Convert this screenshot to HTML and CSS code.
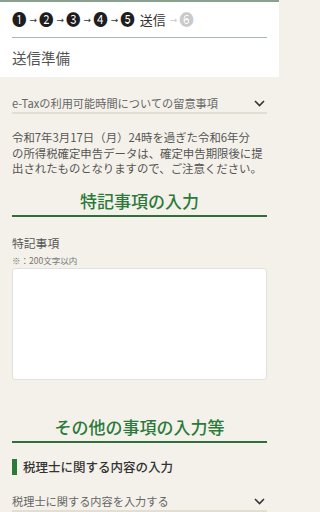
FILE: index.html
```html
<!DOCTYPE html>
<html lang="ja">
<head>
<meta charset="utf-8">
<link rel="stylesheet" href="styles.css">
</head>
<body>
<header class="top">
  <div class="steps">
    <span class="num">❶</span><span class="arrow">→</span>
    <span class="num">❷</span><span class="arrow">→</span>
    <span class="num">❸</span><span class="arrow">→</span>
    <span class="num">❹</span><span class="arrow">→</span>
    <span class="num">❺</span><span class="current">送信</span><span class="arrow dim">→</span>
    <span class="num dim">❻</span>
  </div>
  <h1 class="page-title">送信準備</h1>
</header>
<main class="main">
  <div class="accordion">
    <span>e-Taxの利用可能時間についての留意事項</span>
    <svg class="chev" width="11" height="7" viewBox="0 0 11 7"><path d="M1 1l4.5 4.5L10 1" fill="none" stroke="#333" stroke-width="1.6"/></svg>
  </div>
  <p class="notice">令和7年3月17日（月）24時を過ぎた令和6年分<br>の所得税確定申告データは、確定申告期限後に提出されたものとなりますので、ご注意ください。</p>
  <h2 class="sec-title first">特記事項の入力</h2>
  <div class="field-label">特記事項</div>
  <div class="field-note">※：200文字以内</div>
  <div class="textbox"></div>
  <h2 class="sec-title second">その他の事項の入力等</h2>
  <h3 class="sub-title">税理士に関する内容の入力</h3>
  <div class="accordion acc2">
    <span>税理士に関する内容を入力する</span>
    <svg class="chev" width="11" height="7" viewBox="0 0 11 7"><path d="M1 1l4.5 4.5L10 1" fill="none" stroke="#333" stroke-width="1.6"/></svg>
  </div>
</main>
</body>
</html>
```
FILE: styles.css
```css
html, body {
  margin: 0;
  padding: 0;
}
body {
  width: 279px;
  height: 512px;
  overflow: hidden;
  font-family: "Noto Sans CJK JP", "Noto Sans", sans-serif;
  color: #555;
  background: #f4f1ea;
}
.top {
  background: #fff;
  border-top: 2px solid #8aa08f;
}
.steps {
  margin: 0 12px;
  height: 35px;
  display: flex;
  align-items: center;
  border-bottom: 1px solid #a9b8ad;
  font-size: 14.5px;
  color: #1e1e1e;
}
.num {
  line-height: 1;
}
.arrow {
  font-family: "DejaVu Sans", sans-serif;
  font-size: 9px;
  margin: 0 2px 0 3px;
  color: #333;
}
.dim {
  color: #cacaca;
}
.current {
  font-size: 13px;
  margin-left: 5px;
  margin-right: 1px;
  color: #333;
}
.page-title {
  margin: 0 12px;
  height: 39px;
  line-height: 39px;
  font-size: 14.5px;
  font-weight: normal;
  color: #555;
}
.main {
  padding: 0 12px;
}
.accordion {
  display: flex;
  align-items: center;
  justify-content: space-between;
  margin-top: 18px;
  line-height: 17px;
  font-size: 11.2px;
  color: #666;
  border-bottom: 2px solid #e2ded4;
}
.chev {
  margin-right: 2px;
}
.notice {
  margin: 16px 0 0;
  font-size: 11.4px;
  line-height: 15.6px;
  color: #555;
}
.sec-title {
  margin: 12px 0 0;
  font-size: 17px;
  line-height: 24px;
  font-weight: 500;
  color: #2b7a3b;
  text-align: center;
  border-bottom: 2px solid #2f6f3c;
  padding-bottom: 2px;
}
.sec-title.second {
  margin-top: 35px;
}
.field-label {
  margin-top: 17px;
  font-size: 11.8px;
  line-height: 18px;
  color: #555;
}
.field-note {
  margin-top: 2px;
  font-size: 8.5px;
  line-height: 12px;
  color: #777;
}
.textbox {
  margin-top: 2px;
  height: 110px;
  background: #fff;
  border: 1px solid #e2e0da;
  border-radius: 3px;
}
.sub-title {
  margin: 16px 0 0;
  padding-left: 6px;
  border-left: 5px solid #2b7a3b;
  font-size: 12.5px;
  line-height: 16px;
  font-weight: 500;
  color: #333;
}
.acc2 {
  margin-top: 18px;
}
```
